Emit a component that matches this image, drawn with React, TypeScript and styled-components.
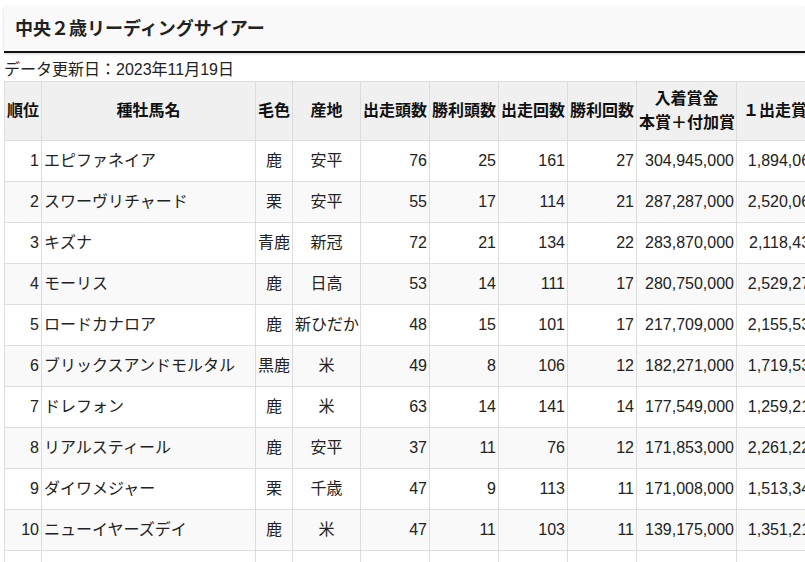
import * as React from 'react';
import styled, { createGlobalStyle } from 'styled-components';

const GlobalStyle = createGlobalStyle`
  html, body {
    margin: 0;
    padding: 0;
    overflow: hidden;
    background: #fff;
  }
  body {
    font-family: "Liberation Sans", "Noto Sans CJK JP", sans-serif;
    color: #222;
  }
`;

type Sire = {
  rank: number;
  name: string;
  color: string;
  origin: string;
  starters: number;
  winners: number;
  starts: number;
  wins: number;
  prize: number;
};

const sires: Sire[] = [
  { rank: 1, name: 'エピファネイア', color: '鹿', origin: '安平', starters: 76, winners: 25, starts: 161, wins: 27, prize: 304945000 },
  { rank: 2, name: 'スワーヴリチャード', color: '栗', origin: '安平', starters: 55, winners: 17, starts: 114, wins: 21, prize: 287287000 },
  { rank: 3, name: 'キズナ', color: '青鹿', origin: '新冠', starters: 72, winners: 21, starts: 134, wins: 22, prize: 283870000 },
  { rank: 4, name: 'モーリス', color: '鹿', origin: '日高', starters: 53, winners: 14, starts: 111, wins: 17, prize: 280750000 },
  { rank: 5, name: 'ロードカナロア', color: '鹿', origin: '新ひだか', starters: 48, winners: 15, starts: 101, wins: 17, prize: 217709000 },
  { rank: 6, name: 'ブリックスアンドモルタル', color: '黒鹿', origin: '米', starters: 49, winners: 8, starts: 106, wins: 12, prize: 182271000 },
  { rank: 7, name: 'ドレフォン', color: '鹿', origin: '米', starters: 63, winners: 14, starts: 141, wins: 14, prize: 177549000 },
  { rank: 8, name: 'リアルスティール', color: '鹿', origin: '安平', starters: 37, winners: 11, starts: 76, wins: 12, prize: 171853000 },
  { rank: 9, name: 'ダイワメジャー', color: '栗', origin: '千歳', starters: 47, winners: 9, starts: 113, wins: 11, prize: 171008000 },
  { rank: 10, name: 'ニューイヤーズデイ', color: '鹿', origin: '米', starters: 47, winners: 11, starts: 103, wins: 11, prize: 139175000 },
  { rank: 11, name: 'シルバーステート', color: '青鹿', origin: '安平', starters: 52, winners: 12, starts: 118, wins: 13, prize: 131420000 },
];

const fmt = (n: number) => Math.round(n).toLocaleString('en-US');

const Page = styled.div`
  padding: 7px 0 0 4px;
`;

const TitleBox = styled.div`
  background: #f9f9f9;
  border-bottom: 2px solid #111;
  box-shadow: 0 1px 3px rgba(0, 0, 0, 0.18);
  padding: 8px 11px;
  height: 28px;
`;

const Title = styled.h2`
  margin: 0;
  font-size: 18px;
  line-height: 28px;
  font-weight: bold;
  color: #222;
`;

const Updated = styled.div`
  margin-top: 5px;
  font-size: 16px;
  line-height: 23px;
  color: #222;
`;

const Table = styled.table`
  border-collapse: collapse;
  table-layout: fixed;
  width: 817px;
  font-size: 16px;
  line-height: 24px;
`;

const HeadCell = styled.th<{ $shift?: number }>`
  background: #f0f0f0;
  border: 1px solid #ddd;
  padding: 5px 2px 5px ${({ $shift }) => 2 + ($shift ?? 0)}px;
  font-weight: bold;
  color: #111;
  text-align: center;
  white-space: nowrap;
  overflow: hidden;
`;

const BodyRow = styled.tr`
  &:nth-child(even) {
    background: #f9f9f9;
  }
`;

const Cell = styled.td<{ $align?: 'left' | 'center' | 'right' }>`
  border: 1px solid #ddd;
  padding: 8px 2px;
  text-align: ${({ $align }) => $align ?? 'right'};
  white-space: nowrap;
  color: #222;
`;

const widths = [37, 214, 37, 68, 69, 69, 69, 69, 100, 85];

export default function App() {
  return (
    <>
      <GlobalStyle />
      <Page>
        <TitleBox>
          <Title>中央２歳リーディングサイアー</Title>
        </TitleBox>
        <Updated>データ更新日：2023年11月19日</Updated>
        <Table>
          <colgroup>
            {widths.map((w, i) => (
              <col key={i} style={{ width: w }} />
            ))}
          </colgroup>
          <thead>
            <tr>
              <HeadCell>順位</HeadCell>
              <HeadCell>種牡馬名</HeadCell>
              <HeadCell>毛色</HeadCell>
              <HeadCell>産地</HeadCell>
              <HeadCell>出走頭数</HeadCell>
              <HeadCell>勝利頭数</HeadCell>
              <HeadCell>出走回数</HeadCell>
              <HeadCell>勝利回数</HeadCell>
              <HeadCell>
                入着賞金
                <br />
                本賞＋付加賞
              </HeadCell>
              <HeadCell $shift={4}>１出走賞金</HeadCell>
            </tr>
          </thead>
          <tbody>
            {sires.map((s) => (
              <BodyRow key={s.rank}>
                <Cell>{s.rank}</Cell>
                <Cell $align="left">{s.name}</Cell>
                <Cell $align="center">{s.color}</Cell>
                <Cell $align="center">{s.origin}</Cell>
                <Cell>{s.starters}</Cell>
                <Cell>{s.winners}</Cell>
                <Cell>{s.starts}</Cell>
                <Cell>{s.wins}</Cell>
                <Cell>{fmt(s.prize)}</Cell>
                <Cell>{fmt(s.prize / s.starts)}</Cell>
              </BodyRow>
            ))}
          </tbody>
        </Table>
      </Page>
    </>
  );
}
